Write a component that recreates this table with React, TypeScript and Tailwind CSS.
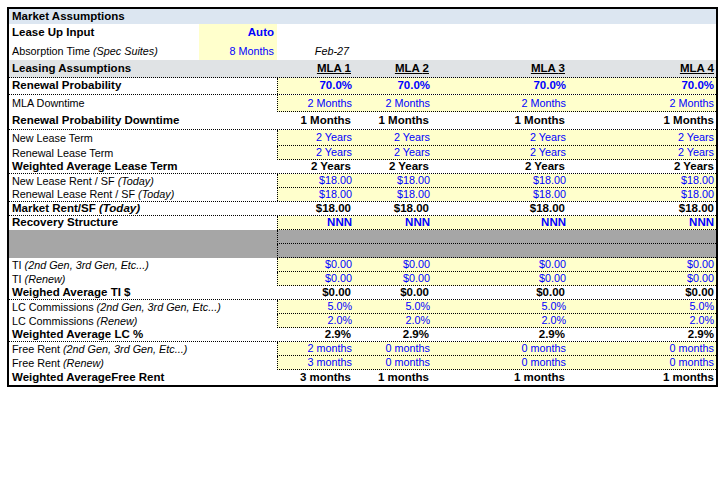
import clsx from "clsx";
import type { ReactNode } from "react";

type Row = {
  label: ReactNode;
  bold?: boolean;
  kind: "input" | "calc" | "gray";
  values?: string[];
  strong?: boolean;
  h: string;
  full?: boolean;
};

const COLS = ["w-[76px]", "w-[78px]", "w-[136px]", "flex-1"];
const REG = "text-[10.8px]";
const BOLD = "text-[11.5px] font-bold";
const LINE = "border-b border-dotted border-black";

const four = (v: string) => [v, v, v, v];
const it = (s: string) => <span className="italic">{s}</span>;

const ROWS: Row[] = [
  { label: "Renewal Probability", bold: true, kind: "input", values: four("70.0%"), strong: true, h: "h-[17px]", full: true },
  { label: "MLA Downtime", kind: "input", values: four("2 Months"), h: "h-[17px]" },
  { label: "Renewal Probability Downtime", bold: true, kind: "calc", values: four("1 Months"), h: "h-[18px]", full: true },
  { label: "New Lease Term", kind: "input", values: four("2 Years"), h: "h-[16px]" },
  { label: "Renewal Lease Term", kind: "input", values: four("2 Years"), h: "h-[14px]" },
  { label: "Weighted Average Lease Term", bold: true, kind: "calc", values: four("2 Years"), h: "h-[14px]", full: true },
  { label: <>New Lease Rent / SF {it("(Today)")}</>, kind: "input", values: four("$18.00"), h: "h-[14px]" },
  { label: <>Renewal Lease Rent / SF {it("(Today)")}</>, kind: "input", values: four("$18.00"), h: "h-[14px]", full: true },
  { label: <>Market Rent/SF {it("(Today)")}</>, bold: true, kind: "calc", values: four("$18.00"), h: "h-[14px]", full: true },
  { label: "Recovery Structure", bold: true, kind: "input", values: four("NNN"), strong: true, h: "h-[14px]" },
  { label: "", kind: "gray", h: "h-[14px]" },
  { label: "", kind: "gray", h: "h-[14px]" },
  { label: <>TI {it("(2nd Gen, 3rd Gen, Etc...)")}</>, kind: "input", values: four("$0.00"), h: "h-[14px]" },
  { label: <>TI {it("(Renew)")}</>, kind: "input", values: four("$0.00"), h: "h-[14px]" },
  { label: "Weighed Average TI $", bold: true, kind: "calc", values: four("$0.00"), h: "h-[14px]", full: true },
  { label: <>LC Commissions {it("(2nd Gen, 3rd Gen, Etc...)")}</>, kind: "input", values: four("5.0%"), h: "h-[14px]" },
  { label: <>LC Commissions {it("(Renew)")}</>, kind: "input", values: four("2.0%"), h: "h-[14px]" },
  { label: "Weighted Average LC %", bold: true, kind: "calc", values: four("2.9%"), h: "h-[14px]", full: true },
  { label: <>Free Rent {it("(2nd Gen, 3rd Gen, Etc...)")}</>, kind: "input", values: ["2 months", "0 months", "0 months", "0 months"], h: "h-[14px]" },
  { label: <>Free Rent {it("(Renew)")}</>, kind: "input", values: ["3 months", "0 months", "0 months", "0 months"], h: "h-[14px]" },
  { label: "Weighted AverageFree Rent", bold: true, kind: "calc", values: ["3 months", "1 months", "1 months", "1 months"], h: "h-[15px]" },
];

function DataRow({ r }: { r: Row }) {
  const valueCls =
    r.kind === "calc" ? clsx(BOLD, "text-black") : clsx(r.strong ? BOLD : REG, "text-[#0000ff]");
  return (
    <div className={clsx("flex", r.h, r.full && LINE)}>
      <div
        className={clsx(
          "flex w-[268px] shrink-0 items-center whitespace-nowrap pl-[3px]",
          r.bold ? BOLD : REG,
          r.kind === "gray" && "bg-[#a6a6a6]"
        )}
      >
        <span>{r.label}</span>
      </div>
      <div
        className={clsx(
          "flex flex-1",
          r.kind === "input" && "border-l border-dotted border-black bg-[#ffffcc]",
          r.kind === "gray" && "border-l border-dotted border-black bg-[#a6a6a6]",
          r.kind !== "calc" && !r.full && LINE
        )}
      >
        {COLS.map((w, i) => (
          <div key={i} className={clsx("flex items-center justify-end pr-[2px]", w, valueCls)}>
            {r.values?.[i]}
          </div>
        ))}
      </div>
    </div>
  );
}

export default function App() {
  return (
    <div className="min-h-screen bg-white pl-[7px] pt-[7px] font-['Liberation_Sans',Arial,sans-serif] leading-none text-black">
      <div className="w-[711px] border-2 border-black">
        <div className={clsx("flex h-[15px] items-center bg-[#dce6f1] pl-[3px]", BOLD)}>Market Assumptions</div>

        <div className="flex h-[18px]">
          <div className={clsx("flex w-[190px] items-center pl-[3px]", BOLD)}>Lease Up Input</div>
          <div className={clsx("flex w-[78px] items-center justify-end bg-[#ffffcc] pr-[3px] text-[#0000ff]", BOLD)}>
            Auto
          </div>
        </div>
        <div className="flex h-[18px]">
          <div className={clsx("flex w-[190px] items-center pl-[3px]", REG)}>
            <span>Absorption Time {it("(Spec Suites)")}</span>
          </div>
          <div className={clsx("flex w-[78px] items-center justify-end bg-[#ffffcc] pr-[3px] text-[#0000ff]", REG)}>
            8 Months
          </div>
          <div className={clsx("flex w-[76px] items-center justify-end pr-[4px] italic", REG)}>Feb-27</div>
        </div>

        <div className={clsx("flex h-[18px] bg-[#e0e3e5]", LINE)}>
          <div className={clsx("flex w-[268px] shrink-0 items-center pl-[3px]", BOLD)}>Leasing Assumptions</div>
          <div className="flex flex-1">
            {COLS.map((w, i) => (
              <div key={i} className={clsx("flex items-center justify-end pr-[2px] underline", w, BOLD)}>
                MLA {i + 1}
              </div>
            ))}
          </div>
        </div>

        {ROWS.map((r, i) => (
          <DataRow key={i} r={r} />
        ))}
      </div>
    </div>
  );
}
